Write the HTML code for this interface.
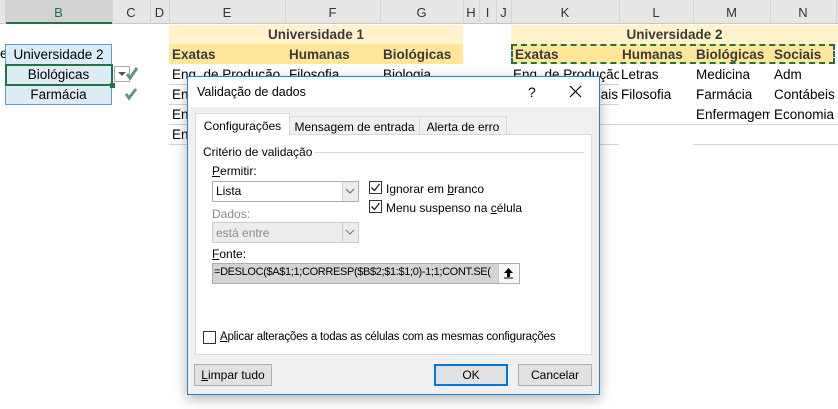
<!DOCTYPE html>
<html><head><meta charset="utf-8"><style>
*{margin:0;padding:0;box-sizing:border-box}
body{width:838px;height:409px;background:#fff;position:relative;overflow:hidden;font-family:"Liberation Sans",sans-serif}
.a{position:absolute;white-space:nowrap}
.ch{font-size:13px;color:#333;text-align:center;top:5px}
.c{font-size:13.5px;color:#000}
.d{font-size:12px;color:#000}
.sep{position:absolute;top:0;width:1px;height:24px;background:#d4d4d4}
.hl{position:absolute;height:1px;background:#d4d4d4}
.btn{position:absolute;height:22px;border:1px solid #adadad;background:#e1e1e1;font-size:12px;text-align:center;line-height:20px}
.cb{position:absolute;width:13px;height:13px;border:1px solid #333;background:#fff}
</style></head><body>
<div class="a" style="left:0;top:0;width:838px;height:24px;background:#e6e6e6;border-bottom:1px solid #c6c6c6"></div>
<div class="a" style="left:5px;top:0;width:107px;height:24px;background:#d2d2d2;border-bottom:2px solid #217346"></div>
<div class="sep" style="left:5px"></div><div class="sep" style="left:112px"></div><div class="sep" style="left:150px"></div><div class="sep" style="left:169px"></div><div class="sep" style="left:285px"></div><div class="sep" style="left:380px"></div><div class="sep" style="left:463px"></div><div class="sep" style="left:479px"></div><div class="sep" style="left:496px"></div><div class="sep" style="left:511px"></div><div class="sep" style="left:619px"></div><div class="sep" style="left:693px"></div><div class="sep" style="left:770px"></div><div class="sep" style="left:836px"></div>
<div class="a ch" style="left:5px;width:107px;color:#217346">B</div>
<div class="a ch" style="left:112px;width:38px">C</div>
<div class="a ch" style="left:150px;width:19px">D</div>
<div class="a ch" style="left:169px;width:116px">E</div>
<div class="a ch" style="left:285px;width:95px">F</div>
<div class="a ch" style="left:380px;width:83px">G</div>
<div class="a ch" style="left:463px;width:16px">H</div>
<div class="a ch" style="left:479px;width:17px">I</div>
<div class="a ch" style="left:496px;width:15px">J</div>
<div class="a ch" style="left:511px;width:108px">K</div>
<div class="a ch" style="left:619px;width:74px">L</div>
<div class="a ch" style="left:693px;width:77px">M</div>
<div class="a ch" style="left:770px;width:66px">N</div>
<div class="a c" style="left:0;top:46px">e</div>
<div class="a" style="left:5px;top:44px;width:107px;height:61px;background:#ddebf7;border:1px solid #5b9bd5"></div>
<div class="a c" style="left:5px;top:47px;width:107px;text-align:center">Universidade 2</div>
<div class="a" style="left:5px;top:64px;width:108px;height:22px;border:2px solid #217346"></div>
<div class="a" style="left:110px;top:83px;width:5px;height:5px;background:#217346"></div>
<div class="a c" style="left:5px;top:67px;width:107px;text-align:center">Biológicas</div>
<div class="a c" style="left:5px;top:87px;width:107px;text-align:center">Farmácia</div>
<div class="a" style="left:114px;top:66px;width:16px;height:16px;border:1px solid #aaa;background:#fff"></div>
<div class="a" style="left:118px;top:72px;width:0;height:0;border-left:4px solid transparent;border-right:4px solid transparent;border-top:4px solid #555"></div>
<svg class="a" style="left:125px;top:66px" width="14" height="14"><path d="M2 8 L5 12 L12 2" stroke="#5a9a78" stroke-width="3" fill="none"/></svg>
<svg class="a" style="left:124px;top:87px" width="14" height="14"><path d="M2 7 L5 11 L12 2" stroke="#5a9a78" stroke-width="3" fill="none"/></svg>
<div class="a" style="left:169px;top:25px;width:294px;height:20px;background:#fff2cc"></div>
<div class="a" style="left:169px;top:44px;width:294px;height:20px;background:#ffe699"></div>
<div class="a c" style="left:169px;top:27px;width:294px;text-align:center;font-weight:bold;color:#3a3a3a">Universidade 1</div>
<div class="a c" style="left:172px;top:47px;font-weight:bold;color:#3a3a3a">Exatas</div>
<div class="a c" style="left:289px;top:47px;font-weight:bold;color:#3a3a3a">Humanas</div>
<div class="a c" style="left:383px;top:47px;font-weight:bold;color:#3a3a3a">Biológicas</div>
<div class="a c" style="left:172px;top:67px">Eng. de Produção</div>
<div class="a c" style="left:289px;top:67px">Filosofia</div>
<div class="a c" style="left:383px;top:67px">Biologia</div>
<div class="a c" style="left:172px;top:87px">En</div><div class="a c" style="left:172px;top:107px">En</div><div class="a c" style="left:172px;top:127px">En</div>
<div class="hl" style="left:169px;top:84px;width:450px"></div>
<div class="hl" style="left:169px;top:104px;width:450px"></div>
<div class="hl" style="left:169px;top:124px;width:669px"></div>
<div class="hl" style="left:169px;top:144px;width:450px"></div>
<div class="hl" style="left:693px;top:144px;width:145px"></div>
<div class="a" style="left:511px;top:25px;width:327px;height:20px;background:#fff2cc"></div>
<div class="a" style="left:511px;top:44px;width:324px;height:20px;background:#ffe699;border:2px dashed #217346"></div>
<div class="a c" style="left:511px;top:27px;width:327px;text-align:center;font-weight:bold;color:#3a3a3a">Universidade 2</div>
<div class="a c" style="left:515px;top:47px;font-weight:bold;color:#3a3a3a">Exatas</div>
<div class="a c" style="left:622px;top:47px;font-weight:bold;color:#3a3a3a">Humanas</div>
<div class="a c" style="left:696px;top:47px;font-weight:bold;color:#3a3a3a">Biológicas</div>
<div class="a c" style="left:774px;top:47px;font-weight:bold;color:#3a3a3a">Sociais</div>
<div class="a c" style="left:513px;top:67px;width:106px;overflow:hidden">Eng. de Produção</div>
<div class="a c" style="left:621px;top:67px">Letras</div>
<div class="a c" style="left:696px;top:67px">Medicina</div>
<div class="a c" style="left:774px;top:67px">Adm</div>
<div class="a c" style="left:599px;top:87px;width:20px;overflow:hidden"><span style="margin-left:-8px">ciais</span></div>
<div class="a c" style="left:621px;top:87px">Filosofia</div>
<div class="a c" style="left:696px;top:87px">Farmácia</div>
<div class="a c" style="left:774px;top:87px">Contábeis</div>
<div class="a c" style="left:696px;top:107px;width:74px;overflow:hidden">Enfermagem</div>
<div class="a c" style="left:774px;top:107px">Economia</div>
<div class="a" style="left:187px;top:76px;width:413px;height:319px;background:#f0f0f0;border:1px solid #1883d7;box-shadow:0 4px 12px rgba(0,0,0,.3)"></div>
<div class="a" style="left:188px;top:77px;width:411px;height:30px;background:#fff"></div>
<div class="a d" style="left:197px;top:85px;font-size:12.5px">Validação de dados</div>
<div class="a d" style="left:528px;top:84px;font-size:14px">?</div>
<svg class="a" style="left:569px;top:85px" width="13" height="13"><path d="M1 1L12 12M12 1L1 12" stroke="#000" stroke-width="1.2"/></svg>
<div class="a" style="left:195px;top:134px;width:397px;height:221px;background:#fff;border:1px solid #d9d9d9"></div>
<div class="a" style="left:289px;top:116px;width:131px;height:19px;background:#f0f0f0;border:1px solid #d9d9d9"></div>
<div class="a d" style="left:289px;top:120px;width:131px;text-align:center">Mensagem de entrada</div>
<div class="a" style="left:419px;top:116px;width:88px;height:19px;background:#f0f0f0;border:1px solid #d9d9d9"></div>
<div class="a d" style="left:419px;top:120px;width:88px;text-align:center">Alerta de erro</div>
<div class="a" style="left:195px;top:113px;width:95px;height:23px;background:#fff;border:1px solid #d9d9d9;border-bottom:none"></div>
<div class="a d" style="left:195px;top:119px;width:95px;text-align:center">Configurações</div>
<div class="a d" style="left:203px;top:145px">Critério de validação</div>
<div class="hl" style="left:314px;top:152px;width:270px;background:#dcdcdc"></div>
<div class="a d" style="left:212px;top:164px"><u>P</u>ermitir:</div>
<div class="a" style="left:212px;top:181px;width:147px;height:21px;border:1px solid #adadad;background:#fff"></div>
<div class="a" style="left:342px;top:182px;width:16px;height:19px;background:#ececec;border-left:1px solid #ccc"></div>
<svg class="a" style="left:345px;top:188px" width="10" height="6"><path d="M1 1L5 5L9 1" stroke="#666" fill="none"/></svg>
<div class="a d" style="left:216px;top:184px">Lista</div>
<div class="a d" style="left:212px;top:207px;color:#8a8a8a">Dados:</div>
<div class="a" style="left:212px;top:222px;width:147px;height:21px;border:1px solid #ccc;background:#ececec"></div>
<div class="a" style="left:342px;top:223px;width:16px;height:19px;border-left:1px solid #ccc"></div>
<svg class="a" style="left:345px;top:229px" width="10" height="6"><path d="M1 1L5 5L9 1" stroke="#777" fill="none"/></svg>
<div class="a d" style="left:216px;top:226px;color:#8a8a8a">está entre</div>
<div class="cb" style="left:369px;top:181px"></div>
<svg class="a" style="left:370px;top:182px" width="11" height="11"><path d="M1.5 5.5L4.5 8.5L9.5 2" stroke="#222" stroke-width="1.3" fill="none"/></svg>
<div class="a d" style="left:386px;top:182px">Ignorar em <u>b</u>ranco</div>
<div class="cb" style="left:369px;top:200px"></div>
<svg class="a" style="left:370px;top:201px" width="11" height="11"><path d="M1.5 5.5L4.5 8.5L9.5 2" stroke="#222" stroke-width="1.3" fill="none"/></svg>
<div class="a d" style="left:386px;top:201px">Menu suspenso na <u>c</u>élula</div>
<div class="a d" style="left:212px;top:247px"><u>F</u>onte:</div>
<div class="a" style="left:212px;top:263px;width:308px;height:21px;border:1px solid #adadad;background:#fff"></div>
<div class="a" style="left:213px;top:264px;width:285px;height:19px;background:#d4d4d4"></div>
<div class="a d" style="left:214px;top:266px;width:283px;overflow:hidden;font-size:11px;letter-spacing:-0.35px">=DESLOC($A$1;1;CORRESP($B$2;$1:$1;0)-1;1;CONT.SE(</div>
<div class="a" style="left:498px;top:264px;width:21px;height:19px;background:#f7f7f7;border-left:1px solid #ccc"></div>
<svg class="a" style="left:503px;top:267px" width="11" height="12"><path d="M5.5 1L1 6H4V10H7V6H10Z" fill="#000"/><path d="M1 11H10" stroke="#000"/></svg>
<div class="cb" style="left:203px;top:331px;border-color:#333"></div>
<div class="a d" style="left:220px;top:331px;font-size:11.5px;letter-spacing:-0.2px"><u>A</u>plicar alterações a todas as células com as mesmas configurações</div>
<div class="btn" style="left:194px;top:364px;width:78px"><u>L</u>impar tudo</div>
<div class="btn" style="left:434px;top:364px;width:74px;border:2px solid #0078d7;line-height:18px">OK</div>
<div class="btn" style="left:518px;top:364px;width:74px">Cancelar</div>
</body></html>
